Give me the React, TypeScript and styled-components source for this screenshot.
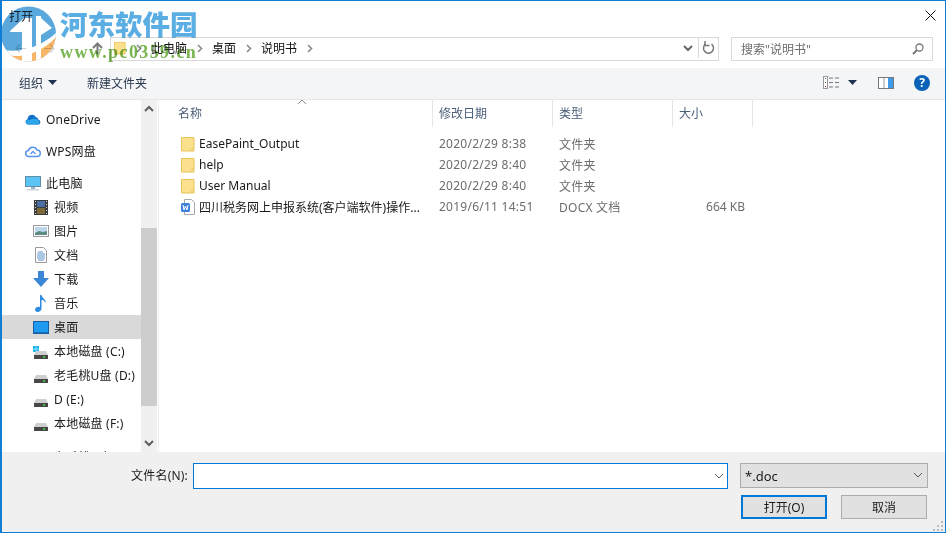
import React from 'react'
import styled, { createGlobalStyle } from 'styled-components'

const GlobalStyle = createGlobalStyle`
  html, body { margin: 0; padding: 0; background: #fff; }
  * { box-sizing: border-box; }
`

const Folder = ({ size = 14 }: { size?: number }) => (
  <svg width={size} height={16} viewBox="0 0 14 16">
    <path d="M.5 1.5h12.5v13.5H.5z" fill="#fbe08d" stroke="#e9c456" />
    <path d="M11 15v-3h2" fill="#fff3c4" stroke="#e9c456" />
  </svg>
)

const WordFile = () => (
  <svg width={14} height={16} viewBox="0 0 14 16">
    <path d="M3.5.5h7l3 3v12h-10z" fill="#fff" stroke="#a8a8a8" />
    <rect x="0" y="4" width="9" height="9" rx="1.5" fill="#3d7fd9" />
    <path d="M2 6l1 5 1.500-4 1.500 4 1-5" fill="none" stroke="#fff" />
  </svg>
)

const Chevron = ({ up, color = '#5f5f5f', width = 2 }: { up?: boolean; color?: string; width?: number }) => (
  <svg width={10} height={7} viewBox="0 0 10 7">
    <path d={up ? 'M1 6l4-4 4 4' : 'M1 1l4 4 4-4'} fill="none" stroke={color} strokeWidth={width} />
  </svg>
)

const Crumb = () => (
  <svg width={6} height={9} viewBox="0 0 6 9">
    <path d="M1 1l3.500 3.500L1 8" fill="none" stroke="#8a8a8a" strokeWidth={1.6} />
  </svg>
)

const Caret = () => (
  <svg width={9} height={5} viewBox="0 0 9 5">
    <path d="M0 0h9L4.500 5z" fill="#1f3350" />
  </svg>
)

const NavArrow = ({ flip }: { flip?: boolean }) => (
  <svg width={11} height={9} viewBox="0 0 11 9" style={flip ? { transform: 'scaleX(-1)' } : undefined}>
    <path d="M11 4.500H1M5 .5l-4 4 4 4" fill="none" stroke="#d2d2d2" strokeWidth={1.2} />
  </svg>
)

const Drive = ({ win }: { win?: boolean }) => (
  <svg width={16} height={16} viewBox="0 0 16 16">
    {win && <path d="M0 3h2.800v2.800H0zM3.200 3H6v2.800H3.200zM0 6.200h2.800V9H0zM3.200 6.200H6V9H3.200z" fill="#19b4f0" />}
    <path d="M3 8h10l2 4H1z" fill="#cfcfcf" />
    <rect x="1" y="12" width="14" height="4" fill="#474747" />
    <rect x="10" y="13.300" width="2" height="1.400" fill="#3fe04c" />
  </svg>
)

const OneDriveIcon = () => (
  <svg width={16} height={12} viewBox="0 0 16 12">
    <path d="M3 11.500a2.700 2.700 0 0 1-.5-5.300A4.500 4.500 0 0 1 10.800 4a3.500 3.500 0 0 1 2.700 2.800A2.400 2.400 0 0 1 13.500 11.500z" fill="#1270c8" />
    <path d="M3 11.500a2.200 2.200 0 0 1 0-4.400c2 0 3-.5 4-1 2-1 5-.5 6.500 1.500a2.400 2.400 0 0 1 0 3.900z" fill="#2ea5e8" />
  </svg>
)

const WpsIcon = () => (
  <svg width={16} height={13} viewBox="0 0 16 13">
    <path d="M4 11.500a3 3 0 0 1-.5-6A4.500 4.500 0 0 1 12 5a3.200 3.200 0 0 1 0 6.500z" fill="none" stroke="#5a93ec" strokeWidth={1.5} />
    <path d="M5.500 9l2.500-2.500L10.500 9" fill="none" stroke="#5a93ec" strokeWidth={1.3} />
  </svg>
)

const PcIcon = () => (
  <svg width={16} height={15} viewBox="0 0 16 15">
    <rect x="0.500" y="0.500" width="15" height="10" fill="#5cc3f5" stroke="#5f8ea8" />
    <rect x="6" y="11" width="4" height="2" fill="#9fb8c6" />
    <rect x="2" y="13" width="12" height="1.500" fill="#c9d6dd" />
  </svg>
)

const VideoIcon = () => (
  <svg width={14} height={15} viewBox="0 0 14 15">
    <rect width="14" height="15" fill="#3a3a3a" />
    <rect x="3" y="1" width="8" height="6" fill="#4c6fa8" />
    <rect x="3" y="8" width="8" height="6" fill="#7d6a3a" />
    <path d="M1 1h1v1H1zM1 4h1v1H1zM1 7h1v1H1zM1 10h1v1H1zM1 13h1v1H1zM12 1h1v1h-1zM12 4h1v1h-1zM12 7h1v1h-1zM12 10h1v1h-1zM12 13h1v1h-1z" fill="#ddd" />
  </svg>
)

const PictureIcon = () => (
  <svg width={16} height={12} viewBox="0 0 16 12">
    <rect x="0.500" y="0.500" width="15" height="11" fill="#fff" stroke="#9a9a9a" />
    <rect x="2" y="2" width="12" height="8" fill="#bcd7ec" />
    <path d="M2 8l4-2 4 1 4-1v4H2z" fill="#5d8c85" />
  </svg>
)

const DocIcon = () => (
  <svg width={12} height={16} viewBox="0 0 12 16">
    <path d="M.5.500h8l3 3v12H.5z" fill="#fff" stroke="#9a9a9a" />
    <path d="M3 5h5M2 7h8M2 9h8M2 11h8M3 13h6" stroke="#5a8fc8" />
  </svg>
)

const DownloadIcon = () => (
  <svg width={16} height={16} viewBox="0 0 16 16">
    <path d="M5 0h6v7h5l-8 9-8-9h5z" fill="#3a87d8" />
  </svg>
)

const MusicIcon = () => (
  <svg width={12} height={17} viewBox="0 0 12 17">
    <path d="M5 0h1.500c.3 3 4.500 4 4.500 8-1-2-3-3-4.500-3.200V13.500C6.500 15.500 4.500 17 2.500 17 1 17 0 16 0 14.800 0 13 2 11.800 3.500 11.800c.6 0 1.100.1 1.500.4z" fill="#2d8ce0" />
  </svg>
)

const DesktopIcon = () => (
  <svg width={16} height={13} viewBox="0 0 16 13">
    <rect x="0.500" y="0.500" width="15" height="12" fill="#1e9bf0" stroke="#16609f" />
    <rect x="1" y="11" width="14" height="1" fill="#0f6fb8" />
  </svg>
)

const SIDEBAR = [
  { label: 'OneDrive', icon: <OneDriveIcon />, indent: 25, gap: 0 },
  { label: 'WPS网盘', icon: <WpsIcon />, indent: 25, gap: 8 },
  { label: '此电脑', icon: <PcIcon />, indent: 25, gap: 8 },
  { label: '视频', icon: <VideoIcon />, indent: 33, gap: 0 },
  { label: '图片', icon: <PictureIcon />, indent: 33, gap: 0 },
  { label: '文档', icon: <DocIcon />, indent: 33, gap: 0 },
  { label: '下载', icon: <DownloadIcon />, indent: 33, gap: 0 },
  { label: '音乐', icon: <MusicIcon />, indent: 33, gap: 0 },
  { label: '桌面', icon: <DesktopIcon />, indent: 33, gap: 0, selected: true },
  { label: '本地磁盘 (C:)', icon: <Drive win />, indent: 33, gap: 0 },
  { label: '老毛桃U盘 (D:)', icon: <Drive />, indent: 33, gap: 0 },
  { label: 'D (E:)', icon: <Drive />, indent: 33, gap: 0 },
  { label: '本地磁盘 (F:)', icon: <Drive />, indent: 33, gap: 0 },
  { label: '老毛桃U盘 (G:)', icon: <Drive />, indent: 33, gap: 10 },
]

const FILES = [
  { name: 'EasePaint_Output', date: '2020/2/29 8:38', type: '文件夹', size: '', icon: <Folder /> },
  { name: 'help', date: '2020/2/29 8:40', type: '文件夹', size: '', icon: <Folder /> },
  { name: 'User Manual', date: '2020/2/29 8:40', type: '文件夹', size: '', icon: <Folder /> },
  { name: '四川税务网上申报系统(客户端软件)操作...', date: '2019/6/11 14:51', type: 'DOCX 文档', size: '664 KB', icon: <WordFile /> },
]

const App = () => {
  return (
    <Dialog>
      <GlobalStyle />
      <TitleBar>
        <Title>打开</Title>
        <svg width={11} height={11} viewBox="0 0 11 11">
          <path d="M.5.500l10 10M10.500.500l-10 10" stroke="#111" strokeWidth={1} />
        </svg>
      </TitleBar>

      <AddressRow>
        <NavButtons>
          <NavArrow />
          <ForwardSlot><NavArrow flip /></ForwardSlot>
          <Grow />
          <svg width={11} height={13} viewBox="0 0 11 13">
            <path d="M5.500 12V2M1 6l4.500-4.500L10 6" fill="none" stroke="#7a7a7a" strokeWidth={2} />
          </svg>
        </NavButtons>
        <AddressBox>
          <Folder size={12} />
          <CrumbGap $w={12}><Crumb /></CrumbGap>
          <CrumbText>此电脑</CrumbText>
          <CrumbGap $w={12}><Crumb /></CrumbGap>
          <CrumbText>桌面</CrumbText>
          <CrumbGap $w={12}><Crumb /></CrumbGap>
          <CrumbText>说明书</CrumbText>
          <CrumbGap $w={12}><Crumb /></CrumbGap>
          <Grow />
          <Chevron color="#666" />
          <RefreshCell>
            <svg width={13} height={14} viewBox="0 0 13 14">
              <path d="M9.500 3.200A5 5 0 1 1 3.500 3.200" fill="none" stroke="#777" strokeWidth={1.5} />
              <path d="M3 0v4.500h4.500" fill="none" stroke="#777" strokeWidth={1.500} />
            </svg>
          </RefreshCell>
        </AddressBox>
        <SearchBox>
          <SearchText>搜索"说明书"</SearchText>
          <svg width={12} height={12} viewBox="0 0 12 12">
            <circle cx="7.500" cy="4.500" r="3.500" fill="none" stroke="#777" strokeWidth={1.3} />
            <path d="M5 7l-4 4" stroke="#777" strokeWidth={2} />
          </svg>
        </SearchBox>
      </AddressRow>

      <Toolbar>
        <ToolText>组织</ToolText>
        <ToolCaret><Caret /></ToolCaret>
        <NewFolder>新建文件夹</NewFolder>
        <Grow />
        <svg width={17} height={13} viewBox="0 0 17 13">
          <rect x="0.500" y="0.500" width="4" height="12" fill="#fff" stroke="#999" />
          <path d="M2 2h1v1H2zM2 6h1v1H2z" fill="#555" />
          <path d="M2 10h1v1H2z" fill="#d33" />
          <path d="M6 2h4M12 2h4M6 6.500h4M12 6.500h4M6 11h4M12 11h4" stroke="#777" />
        </svg>
        <ViewCaret><Caret /></ViewCaret>
        <PaneIcon>
          <svg width={16} height={12} viewBox="0 0 16 12">
            <rect x="0.500" y="0.500" width="15" height="11" fill="#fff" stroke="#777" />
            <path d="M6 1v10" stroke="#999" />
            <rect x="10" y="1" width="5" height="10" fill="#3f9be8" />
          </svg>
        </PaneIcon>
        <HelpIcon>?</HelpIcon>
      </Toolbar>

      <Body>
        <Sidebar>
          {SIDEBAR.map((s) => (
            <NavRow key={s.label} $indent={s.indent} $gap={s.gap} $selected={s.selected}>
              <NavIcon>{s.icon}</NavIcon>
              <NavLabel>{s.label}</NavLabel>
            </NavRow>
          ))}
        </Sidebar>
        <ScrollBar>
          <ScrollCap><Chevron up /></ScrollCap>
          <ScrollTrack>
            <ScrollThumb />
          </ScrollTrack>
          <ScrollCap><Chevron /></ScrollCap>
        </ScrollBar>
        <Main>
          <HeaderRow>
            <HeaderCell $w={274} $pad={19}>
              名称
              <SortMark><Chevron up color="#8c8c8c" width={1} /></SortMark>
            </HeaderCell>
            <HeaderCell $w={120} $pad={6}>修改日期</HeaderCell>
            <HeaderCell $w={120} $pad={6}>类型</HeaderCell>
            <HeaderCell $w={80} $pad={6}>大小</HeaderCell>
          </HeaderRow>
          <FileList>
            {FILES.map((f) => (
              <FileRow key={f.name}>
                <NameCell>
                  {f.icon}
                  <FileName>{f.name}</FileName>
                </NameCell>
                <MetaCell $w={120}>{f.date}</MetaCell>
                <MetaCell $w={120}>{f.type}</MetaCell>
                <SizeCell>{f.size}</SizeCell>
              </FileRow>
            ))}
          </FileList>
        </Main>
      </Body>

      <Footer>
        <FileLine>
          <FieldLabel>文件名(N):</FieldLabel>
          <NameInput>
            <Chevron color="#666" width={1} />
          </NameInput>
          <FilterSelect>
            <span>*.doc</span>
            <Chevron color="#555" width={1} />
          </FilterSelect>
        </FileLine>
        <ButtonLine>
          <DialogButton $primary>打开(O)</DialogButton>
          <DialogButton>取消</DialogButton>
        </ButtonLine>
        <Grip>
          <svg width={12} height={12} viewBox="0 0 12 12">
            <path d="M9 1h2v2H9zM5 5h2v2H5zM9 5h2v2H9zM1 9h2v2H1zM5 9h2v2H5zM9 9h2v2H9z" fill="#bdbdbd" />
          </svg>
        </Grip>
      </Footer>

      <Watermark>
        <svg width={58} height={60} viewBox="0 0 58 60">
          <clipPath id="logo-disc">
            <circle cx="28.500" cy="29" r="27.500" />
          </clipPath>
          <g clipPath="url(#logo-disc)">
            <rect width="58" height="60" fill="#5aa8dc" />
            <path d="M0 44C20 50 44 40 58 26V60H0z" fill="#fff" />
            <path d="M8 50C24 54 44 46 58 30V60H8z" fill="#f8b668" />
            <path d="M10 26L24 13h8v47H22V27H10z" fill="#fff" />
            <path d="M36 11h5v49h-5z" fill="#fff" />
            <path d="M41 13l11 10-11 7z" fill="#fff" />
          </g>
        </svg>
        <WatermarkText>
          <BrandName>河东软件园</BrandName>
          <BrandUrl>www.pc0359.cn</BrandUrl>
        </WatermarkText>
      </Watermark>
    </Dialog>
  )
}

export default App

const UI_FONT = `"Noto Sans", "Noto Sans CJK SC", sans-serif`

const Dialog = styled.div`
position: relative;
width: 946px;
height: 533px;
display: flex;
flex-direction: column;
background: #fff;
border: 1px solid #0f7ed4;
border-left-width: 2px;
overflow: hidden;
font-family: ${UI_FONT};
font-size: 12px;
color: #1a1a1a;
`

const TitleBar = styled.div`
height: 36px;
flex: none;
display: flex;
align-items: center;
justify-content: space-between;
padding: 0 9px 7px 7px;
`

const Title = styled.div`
color: #333;
`

const AddressRow = styled.div`
height: 31px;
flex: none;
display: flex;
align-items: flex-start;
padding-right: 13px;
`

const NavButtons = styled.div`
width: 108px;
height: 23px;
flex: none;
display: flex;
align-items: center;
padding: 0 7px 0 13px;
`

const ForwardSlot = styled.div`
display: flex;
margin-left: 18px;
`

const AddressBox = styled.div`
width: 609px;
height: 24px;
flex: none;
display: flex;
align-items: center;
padding: 0 0 2px 3px;
border: 1px solid #d9d9d9;
`

const CrumbGap = styled.div<{ $w: number }>`
width: ${(p) => p.$w + 13}px;
display: flex;
justify-content: center;
`

const CrumbText = styled.div`
color: #111;
`

const Grow = styled.div`
flex: 1;
`

const RefreshCell = styled.div`
width: 20px;
height: 20px;
margin-left: 5px;
display: flex;
align-items: center;
justify-content: center;
border-left: 1px solid #d9d9d9;
`

const SearchBox = styled.div`
width: 202px;
height: 24px;
flex: none;
margin-left: 12px;
display: flex;
align-items: center;
justify-content: space-between;
padding: 0 8px 1px 9px;
border: 1px solid #d9d9d9;
`

const SearchText = styled.div`
color: #6d6d6d;
`

const Toolbar = styled.div`
height: 32px;
flex: none;
display: flex;
align-items: center;
padding: 0 15px 2px 17px;
background: #f4f5f7;
border-bottom: 1px solid #e6e6e6;
`

const ToolText = styled.div`
color: #2a3a50;
`

const ToolCaret = styled.div`
display: flex;
margin-left: 5px;
`

const NewFolder = styled.div`
margin-left: 30px;
color: #2a3a50;
`

const ViewCaret = styled.div`
display: flex;
margin-left: 8px;
`

const PaneIcon = styled.div`
display: flex;
margin-left: 21px;
`

const HelpIcon = styled.div`
width: 16px;
height: 16px;
margin-left: 20px;
border-radius: 50%;
background: #0a63b8;
color: #fff;
font-weight: 700;
font-size: 12px;
line-height: 16px;
text-align: center;
`

const Body = styled.div`
height: 352px;
flex: none;
display: flex;
`

const Sidebar = styled.div`
width: 139px;
flex: none;
padding-top: 7px;
overflow: hidden;
`

const NavRow = styled.div<{ $indent: number; $gap: number; $selected?: boolean }>`
height: 24px;
display: flex;
align-items: center;
margin-top: ${(p) => p.$gap}px;
padding-left: ${(p) => p.$indent - 2}px;
background: ${(p) => (p.$selected ? '#d9d9d9' : 'transparent')};
`

const NavIcon = styled.div`
width: 16px;
height: 17px;
flex: none;
display: flex;
align-items: center;
justify-content: center;
`

const NavLabel = styled.div`
margin-left: 5px;
white-space: nowrap;
letter-spacing: 0.2px;
`

const ScrollBar = styled.div`
width: 16px;
flex: none;
display: flex;
flex-direction: column;
background: #f0f0f0;
`

const ScrollCap = styled.div`
height: 17px;
flex: none;
display: flex;
align-items: center;
justify-content: center;
`

const ScrollTrack = styled.div`
flex: 1;
padding-top: 111px;
`

const ScrollThumb = styled.div`
height: 178px;
background: #cdcdcd;
`

const Main = styled.div`
flex: 1;
min-width: 0;
margin-left: 1px;
border-left: 1px solid #ededed;
`

const HeaderRow = styled.div`
height: 27px;
display: flex;
`

const HeaderCell = styled.div<{ $w: number; $pad: number }>`
position: relative;
width: ${(p) => p.$w}px;
flex: none;
display: flex;
align-items: center;
padding: 0 0 2px ${(p) => p.$pad}px;
color: #4c607a;
border-right: 1px solid #e5e5e5;
`

const SortMark = styled.div`
position: absolute;
left: 138px;
top: -2px;
display: flex;
`

const FileList = styled.div`
padding-top: 6px;
`

const FileRow = styled.div`
height: 21px;
display: flex;
align-items: center;
`

const NameCell = styled.div`
width: 274px;
flex: none;
display: flex;
align-items: center;
gap: 4px;
padding-left: 22px;
`

const FileName = styled.div`
color: #1a1a1a;
white-space: nowrap;
`

const MetaCell = styled.div<{ $w: number }>`
width: ${(p) => p.$w}px;
flex: none;
padding-left: 6px;
color: #6d6d6d;
white-space: nowrap;
letter-spacing: 0.25px;
`

const SizeCell = styled.div`
width: 80px;
flex: none;
padding-right: 8px;
text-align: right;
color: #6d6d6d;
`

const Footer = styled.div`
position: relative;
flex: 1;
display: flex;
flex-direction: column;
padding-top: 11px;
background: #f0f0f0;
`

const FileLine = styled.div`
display: flex;
align-items: flex-start;
`

const FieldLabel = styled.div`
width: 186px;
height: 26px;
flex: none;
line-height: 26px;
text-align: right;
letter-spacing: 0.2px;
`

const NameInput = styled.div`
width: 535px;
height: 26px;
flex: none;
margin-left: 5px;
display: flex;
align-items: center;
justify-content: flex-end;
padding-right: 3px;
background: #fff;
border: 1px solid #0078d7;
`

const FilterSelect = styled.div`
width: 188px;
height: 25px;
flex: none;
margin-left: 12px;
display: flex;
align-items: center;
justify-content: space-between;
padding: 0 4px 0 4px;
background: #e1e1e1;
border: 1px solid #adadad;
font-size: 13px;
`

const ButtonLine = styled.div`
display: flex;
justify-content: flex-end;
gap: 14px;
margin-top: 6px;
padding-right: 18px;
`

const DialogButton = styled.div<{ $primary?: boolean }>`
width: 86px;
height: 24px;
display: flex;
align-items: center;
justify-content: center;
background: #e1e1e1;
border: ${(p) => (p.$primary ? '2px solid #0078d7' : '1px solid #adadad')};
`

const Grip = styled.div`
position: absolute;
right: 1px;
bottom: 0;
display: flex;
`

const Watermark = styled.div`
position: absolute;
left: -2px;
top: 4px;
display: flex;
pointer-events: none;
mix-blend-mode: multiply;
`

const WatermarkText = styled.div`
margin-left: 2px;
display: flex;
flex-direction: column;
`

const BrandName = styled.div`
font-family: "Noto Sans CJK SC", sans-serif;
font-weight: 900;
font-size: 27.5px;
line-height: 36px;
color: #5aaee3;
`

const BrandUrl = styled.div`
margin-top: 2px;
font-family: "Liberation Serif", serif;
font-weight: 700;
font-size: 18px;
line-height: 18px;
letter-spacing: 1.4px;
color: #78b450;
`
